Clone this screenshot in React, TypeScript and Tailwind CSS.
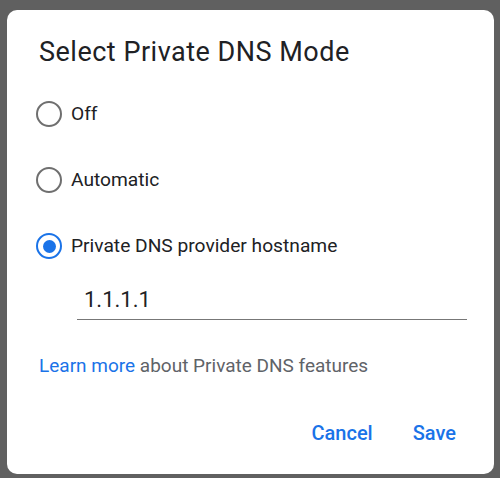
import { useState } from "react";

const options = ["Off", "Automatic", "Private DNS provider hostname"];

function Radio({ on }: { on: boolean }) {
  return (
    <span
      className={`flex h-[26px] w-[26px] shrink-0 items-center justify-center rounded-full border-[2.5px] ${
        on ? "border-[#1a73e8]" : "border-[#6f6f6f]"
      }`}
    >
      {on && <span className="h-[13px] w-[13px] rounded-full bg-[#1a73e8]" />}
    </span>
  );
}

export default function App() {
  const [mode, setMode] = useState(2);
  return (
    <div className="flex h-[478px] w-[500px] bg-[#606060] pb-[4px] pl-[7px] pr-[6px] pt-[10px]" style={{ fontFamily: "Roboto, 'Noto Sans', sans-serif" }}>
      <div className="flex flex-1 flex-col rounded-[10px] bg-white">
        <h1 className="pl-[32px] pt-[25px] text-[27px] leading-[34px] tracking-[0.5px] text-[#202124]">Select Private DNS Mode</h1>

        <div className="mt-[12px] flex flex-col">
          {options.map((o, i) => (
            <button key={o} onClick={() => setMode(i)} className="flex h-[66px] items-center gap-[9px] pl-[29px] text-left">
              <Radio on={mode === i} />
              <span className="text-[19.2px] text-[#202124]">{o}</span>
            </button>
          ))}
        </div>

        <div className="ml-[70px] mr-[27px] mt-[7px] border-b-[1.5px] border-[#777] pb-[5px] pl-[7px]">
          <span className="text-[22px] leading-[28px] text-[#202124]">1.1.1.1</span>
        </div>

        <p className="pl-[32px] pt-[34px] text-[19px] leading-[24px] text-[#5f6368]">
          <span className="text-[#1a73e8]">Learn more</span> about Private DNS features
        </p>

        <div className="mt-[42px] flex justify-end gap-[40px] pr-[38px]">
          <button className="text-[20px] font-medium leading-[26px] text-[#1a73e8]">Cancel</button>
          <button className="text-[20px] font-medium leading-[26px] text-[#1a73e8]">Save</button>
        </div>
      </div>
    </div>
  );
}
